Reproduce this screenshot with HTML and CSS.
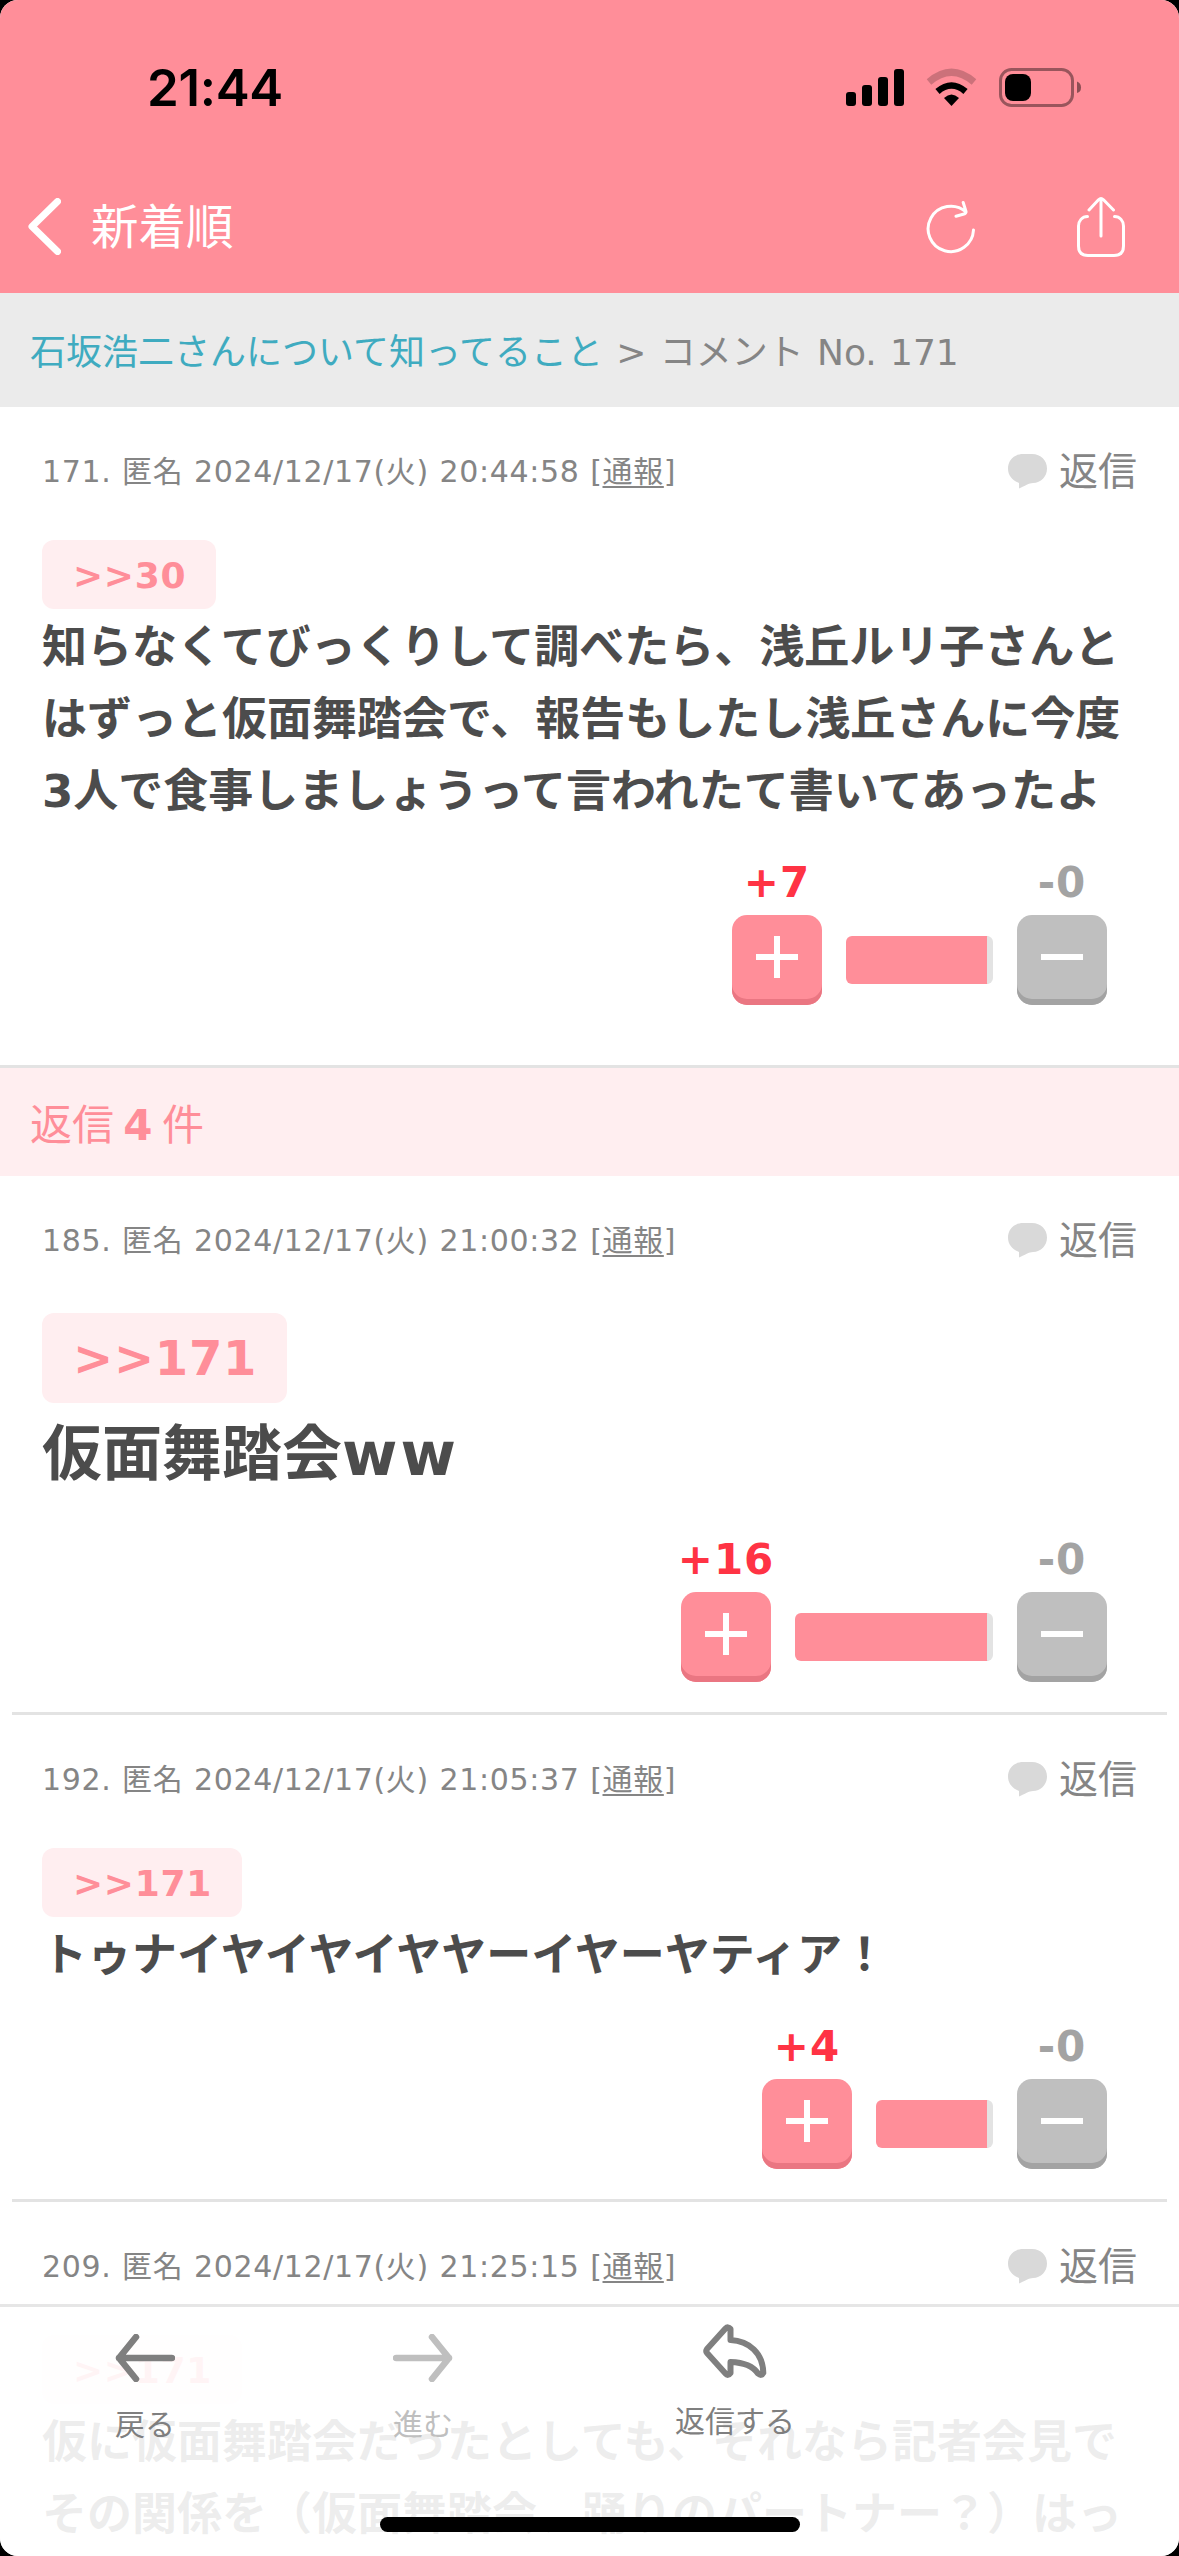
FILE: index.html
```html
<!DOCTYPE html>
<html lang="ja">
<head>
<meta charset="utf-8">
<title>コメント No. 171</title>
<link rel="stylesheet" href="styles.css">
</head>
<body>
<svg class="sprite" aria-hidden="true">
  <symbol id="bubble" viewBox="0 0 39 35"><path d="M15 0H24C33 0 39 6.5 39 14.500S33 29 25 29C21 29 17 32 11 34.500V29C4.500 26.500 0 21.500 0 14.500C0 6.500 6 0 15 0Z" fill="#d9d9d9"/></symbol>
  <symbol id="plus" viewBox="0 0 42 42"><path d="M21 0V42M0 21H42" stroke="#fff" stroke-width="6"/></symbol>
  <symbol id="minus" viewBox="0 0 42 42"><path d="M0 21H42" stroke="#fff" stroke-width="6"/></symbol>
</svg>
<div class="app">
  <header class="top">
    <div class="status">
      <span class="clock">21:44</span>
      <svg class="status-icons" width="236" height="40" viewBox="846 68 236 40">
        <g fill="#000">
          <rect x="846" y="92" width="10" height="14" rx="3"/>
          <rect x="862" y="85" width="10" height="21" rx="3"/>
          <rect x="878" y="77" width="10" height="29" rx="3"/>
          <rect x="894" y="69" width="10" height="37" rx="3"/>
          <path d="M951.500 106L944 98Q951.500 91 959 98Z"/>
        </g>
        <path d="M937.500 91.500Q951.500 79.500 965.500 91.500" fill="none" stroke="#000" stroke-width="6.500"/>
        <path d="M929 82Q951.500 62.500 974 82" fill="none" stroke="#000" stroke-opacity=".2" stroke-width="7"/>
        <rect x="1000.500" y="69.500" width="72" height="36" rx="11" fill="none" stroke="#000" stroke-opacity=".4" stroke-width="3"/>
        <path d="M1077 81.500Q1081 83 1081 87.500T1077 93Z" fill="#000" fill-opacity=".45"/>
        <rect x="1005" y="74" width="26" height="27" rx="8"/>
      </svg>
    </div>
    <nav class="nav">
      <svg width="33" height="57" viewBox="0 0 33 57"><path d="M29.500 3.500L4 28.500L29.500 53.500" fill="none" stroke="#fff" stroke-width="7" stroke-linecap="round" stroke-linejoin="round"/></svg>
      <span class="nav-title">新着順</span>
      <svg class="refresh" width="52" height="54" viewBox="925 198 52 54"><path d="M973.500 228A22.700 22.700 0 1 1 966 210M963.200 200.500L966 209.500Q966 211.500 964 212L956 214.300" fill="none" stroke="#fff" stroke-width="3" stroke-linecap="round" stroke-linejoin="round"/></svg>
      <svg width="50" height="62" viewBox="1076 195 50 62"><path d="M1087.500 215.500C1082 215.500 1078.500 220 1078.500 225V245Q1078.500 254.500 1088 254.500H1114Q1123.500 254.500 1123.500 245V225C1123.500 220 1120 215.500 1114.500 215.500M1101 235V198M1089 209L1098.500 198.800Q1101 196.500 1103.500 198.800L1113.500 209" fill="none" stroke="#fff" stroke-width="3" stroke-linecap="round" stroke-linejoin="round"/></svg>
    </nav>
  </header>
  <div class="crumb"><a>石坂浩二さんについて知ってること</a> &gt; コメント No. 171</div>
  <main>
    <article class="post post-main">
      <div class="head"><span class="meta">171. 匿名 2024/12/17(火) 20:44:58 [<u>通報</u>]</span><span class="reply"><svg width="39" height="35"><use href="#bubble"/></svg>返信</span></div>
      <a class="anchor">&gt;&gt;30</a>
      <p class="body">知らなくてびっくりして調べたら、浅丘ルリ子さんと<br>はずっと仮面舞踏会で、報告もしたし浅丘さんに今度<br>3人で食事しましょうって言われたて書いてあったよ</p>
      <div class="votes">
        <div class="vote up"><b>+7</b><button><svg width="42" height="42"><use href="#plus"/></svg></button></div>
        <div class="bar" style="width:147px"></div>
        <div class="vote down"><b>-0</b><button><svg width="42" height="42"><use href="#minus"/></svg></button></div>
      </div>
    </article>
    <h2 class="count">返信 <b>4</b> 件</h2>
    <article class="post post-large">
      <div class="head"><span class="meta">185. 匿名 2024/12/17(火) 21:00:32 [<u>通報</u>]</span><span class="reply"><svg width="39" height="35"><use href="#bubble"/></svg>返信</span></div>
      <a class="anchor">&gt;&gt;171</a>
      <p class="body">仮面舞踏会<span class="latin">ww</span></p>
      <div class="votes">
        <div class="vote up"><b>+16</b><button><svg width="42" height="42"><use href="#plus"/></svg></button></div>
        <div class="bar" style="width:198px"></div>
        <div class="vote down"><b>-0</b><button><svg width="42" height="42"><use href="#minus"/></svg></button></div>
      </div>
    </article>
    <article class="post">
      <div class="head"><span class="meta">192. 匿名 2024/12/17(火) 21:05:37 [<u>通報</u>]</span><span class="reply"><svg width="39" height="35"><use href="#bubble"/></svg>返信</span></div>
      <a class="anchor">&gt;&gt;171</a>
      <p class="body">トゥナイヤイヤイヤヤーイヤーヤティア！</p>
      <div class="votes">
        <div class="vote up"><b>+4</b><button><svg width="42" height="42"><use href="#plus"/></svg></button></div>
        <div class="bar" style="width:117px"></div>
        <div class="vote down"><b>-0</b><button><svg width="42" height="42"><use href="#minus"/></svg></button></div>
      </div>
    </article>
    <article class="post">
      <div class="head"><span class="meta">209. 匿名 2024/12/17(火) 21:25:15 [<u>通報</u>]</span><span class="reply"><svg width="39" height="35"><use href="#bubble"/></svg>返信</span></div>
      <a class="anchor">&gt;&gt;171</a>
      <p class="body">仮に仮面舞踏会だったとしても、それなら記者会見で<br>その関係を（仮面舞踏会、踊りのパートナー？）はっ</p>
    </article>
  </main>
  <footer class="toolbar">
    <div class="tool back"><svg width="60" height="48" viewBox="0 0 60 48"><path d="M57 24H4M21 3L4 24L21 45" fill="none" stroke="currentColor" stroke-width="6.500" stroke-linecap="round" stroke-linejoin="round"/></svg><span>戻る</span></div>
    <div class="tool forward"><svg width="60" height="48" viewBox="0 0 60 48"><path d="M3 24H56M39 3L56 24L39 45" fill="none" stroke="currentColor" stroke-width="6.500" stroke-linecap="round" stroke-linejoin="round"/></svg><span>進む</span></div>
    <div class="tool respond"><svg width="64" height="54" viewBox="0 0 64 54"><path d="M22.500 4.500Q25 2 27.500 5V16C46 17 60 29 60.300 49Q58.500 52.500 55 49.500C50 42 42 38.500 27.500 38V49Q25 52.500 22.500 49.500L4 29Q2.500 27 4 25Z" fill="none" stroke="currentColor" stroke-width="6" stroke-linejoin="round"/></svg><span>返信する</span></div>
    <div class="home-bar"></div>
  </footer>
</div>
</body>
</html>
```
FILE: styles.css
```css
* { box-sizing: border-box; }
body {
  margin: 0;
  background: #000;
  color: #4c4c4c;
  font-family: "DejaVu Sans", "Noto Sans CJK JP", sans-serif;
}
.sprite { display: none; }
svg { display: block; flex: none; }
.app {
  position: relative;
  width: 1179px;
  height: 2556px;
  overflow: hidden;
  border-radius: 18px;
  background: #fff;
}

.top { height: 293px; background: #ff8e99; }
.status {
  display: flex;
  justify-content: space-between;
  align-items: center;
  height: 176px;
  padding: 0 97px 0 147px;
  color: #000;
}
.clock { font: 600 51px/60px Inter, sans-serif; letter-spacing: -.3px; }
.nav {
  display: flex;
  align-items: center;
  height: 101px;
  padding: 0 53px 0 28px;
  color: #fff;
}
.nav-title {
  margin-left: 30px;
  padding-bottom: 5px;
  font: 400 47.5px/60px "Noto Sans CJK JP", sans-serif;
}
.refresh { margin: 0 99px 0 auto; }

.crumb {
  height: 114px;
  padding: 5px 30px 0;
  background: #ebebeb;
  color: #858585;
  font-size: 36px;
  line-height: 110px;
  word-spacing: 1.8px;
  white-space: nowrap;
}
.crumb a { color: #3fabc0; }

.post {
  margin: 0 12px;
  padding: 0 30px 30px;
  border-bottom: 3px solid #e3e3e3;
}
.post-main { margin: 0; padding: 0 42px 60px; }
.head {
  display: flex;
  justify-content: space-between;
  height: 133px;
  padding-top: 35px;
  line-height: 60px;
  color: #858585;
}
.post-large .head { height: 137px; }
.meta { font-size: 30px; letter-spacing: .65px; word-spacing: .5px; }
.meta u { text-decoration-thickness: 2px; text-underline-offset: 4px; }
.reply { display: flex; gap: 12px; font-size: 39px; }
.reply svg { margin-top: 12px; }
.anchor {
  display: block;
  width: fit-content;
  height: 69px;
  padding: 1px 30px 0 31px;
  border-radius: 12px;
  background: #ffeef0;
  color: #ff8e99;
  font-size: 36px;
  font-weight: 700;
  line-height: 69px;
  letter-spacing: .7px;
}
.body {
  margin: 3px 0 -2px;
  font-size: 45px;
  font-weight: 700;
  line-height: 72px;
  white-space: nowrap;
}
.post-large .anchor { height: 90px; font-size: 48px; line-height: 89px; }
.post-large .body { font-size: 60px; line-height: 96px; }
.latin { letter-spacing: 3px; }

.votes {
  display: flex;
  justify-content: flex-end;
  align-items: flex-end;
  gap: 24px;
  margin-top: 36px;
  padding-right: 30px;
}
.post-large .votes { margin-top: 39px; }
.vote {
  display: flex;
  flex-direction: column;
  align-items: center;
  width: 90px;
}
.vote b {
  height: 53px;
  font-size: 42px;
  line-height: 42px;
  letter-spacing: 1px;
  white-space: nowrap;
}
.vote button {
  display: grid;
  place-items: center;
  width: 90px;
  height: 90px;
  padding: 0 0 6px;
  border: 0;
  border-radius: 15px;
}
.up b { color: #ff3344; }
.up button { background: #ff8e99; box-shadow: inset 0 -6px #ea7682; }
.down b { color: #a3a3a3; }
.down button { background: #bfbfbf; box-shadow: inset 0 -6px #a3a3a3; }
.bar {
  height: 48px;
  margin-bottom: 21px;
  border-right: 6px solid #e3e3e3;
  border-radius: 6px;
  background: #ff8e99;
}

.count {
  height: 108px;
  margin: 0;
  padding: 4px 30px 0;
  background: #ffeef0;
  color: #ff8e99;
  font-size: 42px;
  font-weight: 400;
  line-height: 108px;
  word-spacing: -4px;
}
.count b { font-weight: 700; }

.toolbar {
  position: absolute;
  inset: 2304px 0 0;
  display: grid;
  grid-template-columns: 290px 266px 358px;
  border-top: 3px solid #e6e6e6;
  background: rgba(255, 255, 255, .9);
  color: #7f7f7f;
  font-size: 30px;
  line-height: 36px;
}
.tool {
  display: flex;
  flex-direction: column;
  align-items: center;
  gap: 25px;
  padding-top: 27px;
}
.forward { color: #bfbfbf; }
.respond { padding-top: 17px; gap: 26px; }
.home-bar {
  position: absolute;
  left: 380px;
  bottom: 24px;
  width: 420px;
  height: 15px;
  border-radius: 8px;
  background: #000;
}
```
